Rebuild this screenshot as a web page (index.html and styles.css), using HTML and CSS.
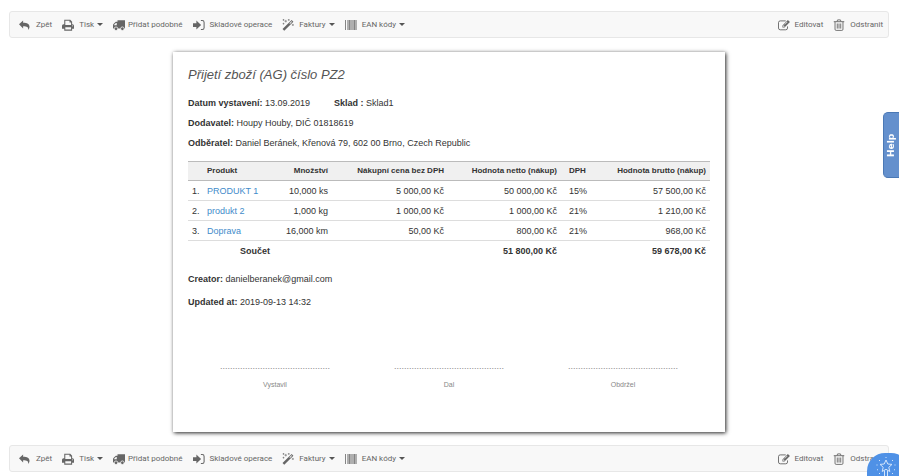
FILE: index.html
```html
<!DOCTYPE html>
<html lang="cs">

<head>
    <meta charset="UTF-8">
    <meta name="viewport" content="width=device-width, initial-scale=1.0">
    <title>Přijetí zboží (AG) číslo PZ2</title>
    <link rel="stylesheet" href="styles.css">
</head>

<body>
    <svg class="sprite" aria-hidden="true">
        <symbol id="icon-back" viewBox="0 0 16 16">
            <path d="M0 7l5.500-5v3c5.500 0 8.500 1.500 8.500 5.300 0 2-.8 3.200-1.800 4.200.6-3.700-1.400-5-6.700-5v3z" />
        </symbol>
        <symbol id="icon-print" viewBox="0 0 16 16">
            <path fill-rule="evenodd" d="M3 1h8l2.500 2.500V7h.5a2 2 0 0 1 2 2v4h-2.500v2.500h-10.500V13H0V9a2 2 0 0 1 2-2h1zM4.400 2.400V8h7.700V4.500H10V2.400zM4.400 11v3h7.700v-3zM13.300 8.500v1.200h1.300V8.500z" />
        </symbol>
        <symbol id="icon-truck" viewBox="0 0 16 16">
            <path fill-rule="evenodd" d="M6 1.500h10v11H0V8.500c0-1 .2-1.500.9-2.200L3 4.300c.5-.5 1-.6 1.600-.6H6zM3.800 5.200L1.500 7.600V8.200H5v-3z" />
            <circle cx="4" cy="13" r="2.400" stroke="#f8f8f8" />
            <circle cx="12.500" cy="13" r="2.400" stroke="#f8f8f8" />
        </symbol>
        <symbol id="icon-enter" viewBox="0 0 16 16">
            <path d="M0 5.500h4.500V2L10.800 8l-6.300 6v-3.500H0z" />
            <path d="M10.500 2h1.800a2.500 2.500 0 0 1 2.500 2.500v7a2.500 2.500 0 0 1-2.500 2.500h-1.800" fill="none" stroke="currentColor" stroke-width="1.400" />
        </symbol>
        <symbol id="icon-wand" viewBox="0 0 16 16">
            <path fill-rule="evenodd" d="M12.900 1.200l2.300 2.300L3 15.700.7 13.400zM12.800 2.900L9.900 5.800l.8.700 2.800-2.800z" />
            <path d="M5 1.200v3.400M3.300 2.900h3.400M9 0v2.400M7.800 1.200h2.400M2 0v2.400M.8 1.200h2.400M2 5v2.400M.8 6.200h2.400M14.500 6.500v2.800M13.100 7.900h2.800" fill="none" stroke="currentColor" stroke-width=".8" />
        </symbol>
        <symbol id="icon-barcode" viewBox="0 0 12 12">
            <path d="M0 1h1v10H0zM4 1h1v10H4zM9 1h1v10H9z" opacity=".8" />
            <path d="M2 1h2v10H2zM5 1h4v10H5zM10 1h2v10h-2z" opacity=".5" />
        </symbol>
        <symbol id="icon-edit" viewBox="0 0 17 16">
            <path d="M11 2.200H3.200A2.500 2.500 0 0 0 .7 4.700v7.600a2.500 2.500 0 0 0 2.500 2.500h7.800a2.500 2.500 0 0 0 2.500-2.500V10" fill="none" stroke="currentColor" stroke-width="1.300" />
            <path fill-rule="evenodd" d="M14 1l2.900 2.800-7.700 7.700H6.300V8.700zM7.300 9.200v1.400h1.400l.7-.7L8 8.500zM12.800 3.500L9 7.300l.5.500 3.800-3.800z" />
        </symbol>
        <symbol id="icon-trash" viewBox="0 0 16 16">
            <path d="M1 3.600h14M5.300 3.500l.8-2.300h3.800l.8 2.300M2.700 3.600v10a1.500 1.500 0 0 0 1.500 1.600h7.600a1.500 1.500 0 0 0 1.500-1.600v-10M5.700 6v6.800M8 6v6.800M10.300 6v6.800" fill="none" stroke="currentColor" stroke-width="1.200" />
        </symbol>
    </svg>

    <nav class="toolbar">
        <a href="#" class="tool"><svg class="icon"><use href="#icon-back" /></svg>Zpět</a>
        <button type="button" class="tool"><svg class="icon"><use href="#icon-print" /></svg>Tisk<span class="caret"></span></button>
        <a href="#" class="tool tight"><svg class="icon"><use href="#icon-truck" /></svg>Přidat podobné</a>
        <a href="#" class="tool"><svg class="icon"><use href="#icon-enter" /></svg>Skladové operace</a>
        <button type="button" class="tool"><svg class="icon"><use href="#icon-wand" /></svg>Faktury<span class="caret"></span></button>
        <button type="button" class="tool"><svg class="icon"><use href="#icon-barcode" /></svg>EAN kódy<span class="caret"></span></button>
        <div class="toolbar-right">
            <a href="#" class="tool"><svg class="icon"><use href="#icon-edit" /></svg>Editovat</a>
            <a href="#" class="tool"><svg class="icon"><use href="#icon-trash" /></svg>Odstranit</a>
        </div>
    </nav>

    <main class="sheet">
        <h1>Přijetí zboží (AG) číslo PZ2</h1>
        <p class="dates"><span><b>Datum vystavení:</b> 13.09.2019</span><span><b>Sklad :</b> Sklad1</span></p>
        <p><b>Dodavatel:</b> Houpy Houby, DIČ 01818619</p>
        <p><b>Odběratel:</b> Daniel Beránek, Křenová 79, 602 00 Brno, Czech Republic</p>

        <table class="products">
            <colgroup>
                <col class="col-index">
                <col class="col-name">
                <col class="col-amount">
                <col class="col-price">
                <col class="col-netto">
                <col class="col-vat">
                <col>
            </colgroup>
            <thead>
                <tr>
                    <th></th>
                    <th class="left">Produkt</th>
                    <th>Množství</th>
                    <th>Nákupní cena bez DPH</th>
                    <th>Hodnota netto (nákup)</th>
                    <th class="vat">DPH</th>
                    <th>Hodnota brutto (nákup)</th>
                </tr>
            </thead>
            <tbody>
                <tr>
                    <td class="left">1.</td>
                    <td class="left"><a href="#">PRODUKT 1</a></td>
                    <td>10,000 ks</td>
                    <td>5 000,00 Kč</td>
                    <td>50 000,00 Kč</td>
                    <td class="vat">15%</td>
                    <td>57 500,00 Kč</td>
                </tr>
                <tr>
                    <td class="left">2.</td>
                    <td class="left"><a href="#">produkt 2</a></td>
                    <td>1,000 kg</td>
                    <td>1 000,00 Kč</td>
                    <td>1 000,00 Kč</td>
                    <td class="vat">21%</td>
                    <td>1 210,00 Kč</td>
                </tr>
                <tr>
                    <td class="left">3.</td>
                    <td class="left"><a href="#">Doprava</a></td>
                    <td>16,000 km</td>
                    <td>50,00 Kč</td>
                    <td>800,00 Kč</td>
                    <td class="vat">21%</td>
                    <td>968,00 Kč</td>
                </tr>
            </tbody>
            <tfoot>
                <tr>
                    <td colspan="2">Součet</td>
                    <td></td>
                    <td></td>
                    <td>51 800,00 Kč</td>
                    <td></td>
                    <td>59 678,00 Kč</td>
                </tr>
            </tfoot>
        </table>

        <div class="meta">
            <p><b>Creator:</b> danielberanek@gmail.com</p>
            <p><b>Updated at:</b> 2019-09-13 14:32</p>
        </div>

        <div class="signatures">
            <div class="signature">Vystavil</div>
            <div class="signature">Dal</div>
            <div class="signature">Obdržel</div>
        </div>
    </main>

    <nav class="toolbar">
        <a href="#" class="tool"><svg class="icon"><use href="#icon-back" /></svg>Zpět</a>
        <button type="button" class="tool"><svg class="icon"><use href="#icon-print" /></svg>Tisk<span class="caret"></span></button>
        <a href="#" class="tool tight"><svg class="icon"><use href="#icon-truck" /></svg>Přidat podobné</a>
        <a href="#" class="tool"><svg class="icon"><use href="#icon-enter" /></svg>Skladové operace</a>
        <button type="button" class="tool"><svg class="icon"><use href="#icon-wand" /></svg>Faktury<span class="caret"></span></button>
        <button type="button" class="tool"><svg class="icon"><use href="#icon-barcode" /></svg>EAN kódy<span class="caret"></span></button>
        <div class="toolbar-right">
            <a href="#" class="tool"><svg class="icon"><use href="#icon-edit" /></svg>Editovat</a>
            <a href="#" class="tool"><svg class="icon"><use href="#icon-trash" /></svg>Odstranit</a>
        </div>
    </nav>

    <button type="button" class="help-tab">Help</button>
    <button type="button" class="guide" aria-label="Help">
        <svg viewBox="0 0 24 24">
            <path d="M12 3l1.800 4 4.200.4-3.200 2.900 1 4.200-3.800-2.200-3.800 2.200 1-4.200L6 7.400l4.200-.4zM10.500 13.500V24M13.500 13.500V24" />
            <path d="M12 0v1M5 3l1 1M19 3l-1 1M2.500 8h1M20.500 8h1M3 13l1-.5M21 13l-1-.5M5 17l1-1M19 17l-1-1M3 20h2M19 20h2" />
        </svg>
    </button>
</body>

</html>
```
FILE: styles.css
```css
* {
    box-sizing: border-box;
}

body {
    margin: 0;
    padding: 11px 10px 4px 9px;
    background: #fff;
    color: #333;
    font-family: "Liberation Sans", Arial, sans-serif;
    font-size: 9px;
    line-height: 12px;
}

.sprite {
    display: none;
}

.toolbar {
    display: flex;
    align-items: center;
    gap: 10px;
    height: 27px;
    padding: 0 5px 0 9px;
    background: #f8f8f8;
    border: 1px solid #e7e7e7;
    border-radius: 3px;
}

.toolbar-right {
    display: flex;
    gap: 10px;
    margin-left: auto;
}

.tool {
    display: flex;
    align-items: center;
    gap: 3px;
    padding: 0;
    border: none;
    background: none;
    color: #666;
    font-family: Roboto, Arial, sans-serif;
    font-size: 8px;
    line-height: 12px;
    text-decoration: none;
    white-space: nowrap;
    cursor: pointer;
}

.tool:hover {
    color: #333;
}

.tool .icon {
    width: 12px;
    height: 12px;
    margin-right: 2px;
    fill: currentColor;
}

.tool.tight .icon {
    margin-right: 0;
}

.caret {
    border-top: 3px solid #555;
    border-left: 3px solid transparent;
    border-right: 3px solid transparent;
}

.sheet {
    max-width: 552px;
    min-height: 380px;
    margin: 14px auto 13px;
    padding: 15px 15px 40px;
    background: #fff;
    box-shadow: 1px 1px 4px #222;
}

.sheet h1 {
    margin: 0 0 14px;
    color: #555;
    font-size: 13px;
    font-style: italic;
    font-weight: normal;
    line-height: 16px;
}

.sheet p {
    margin: 0 0 8px;
}

.dates {
    display: flex;
    gap: 24px;
}

.products {
    width: 100%;
    margin-top: 12px;
    border-collapse: collapse;
    table-layout: fixed;
}

.products th,
.products td {
    padding: 4px;
    text-align: right;
    white-space: nowrap;
}

.products th {
    padding: 3px 4px;
    background: #f0f0f0;
    border-top: 1px solid #bbb;
    border-bottom: 1px solid #bbb;
    font-size: 8px;
}

.products tbody td {
    padding: 4px 4px 3px;
    border-bottom: 1px solid #ddd;
}

.products tfoot td {
    font-weight: bold;
}

.products .left {
    text-align: left;
}

.products .vat {
    padding-left: 8px;
    text-align: left;
}

.products a {
    color: #428bca;
    text-decoration: none;
}

.col-index {
    width: 15px;
}

.col-name {
    width: 71px;
}

.col-amount {
    width: 58px;
}

.col-price {
    width: 116px;
}

.col-netto {
    width: 113px;
}

.col-vat {
    width: 40px;
}

.meta {
    display: grid;
    gap: 11px;
    margin-top: 12px;
}

.sheet .meta p {
    margin: 0;
}

.signatures {
    display: grid;
    grid-template-columns: repeat(3, 1fr);
    margin-top: 52px;
    color: #888;
    font-size: 7px;
    text-align: center;
}

.signature::before {
    content: "............................................";
    display: block;
    margin-bottom: 7px;
    font-size: 9px;
}

.help-tab {
    position: fixed;
    top: 112px;
    right: 0;
    width: 16px;
    height: 66px;
    padding: 0;
    border: 1px solid #4a78b5;
    border-left: none;
    border-radius: 0 5px 5px 0;
    background: #6490cd;
    color: #fff;
    font-family: "DejaVu Sans", Verdana, sans-serif;
    font-size: 9px;
    font-weight: bold;
    line-height: 12px;
    writing-mode: vertical-rl;
    transform: rotate(180deg);
}

.guide {
    position: fixed;
    right: -10px;
    bottom: -20px;
    display: flex;
    align-items: flex-start;
    width: 42px;
    height: 43px;
    padding: 4px 7px;
    border: none;
    border-radius: 18px;
    background: #4f91e6;
}

.guide svg {
    flex: none;
    width: 24px;
    height: 24px;
    fill: none;
    stroke: #d5e6fb;
}
```
